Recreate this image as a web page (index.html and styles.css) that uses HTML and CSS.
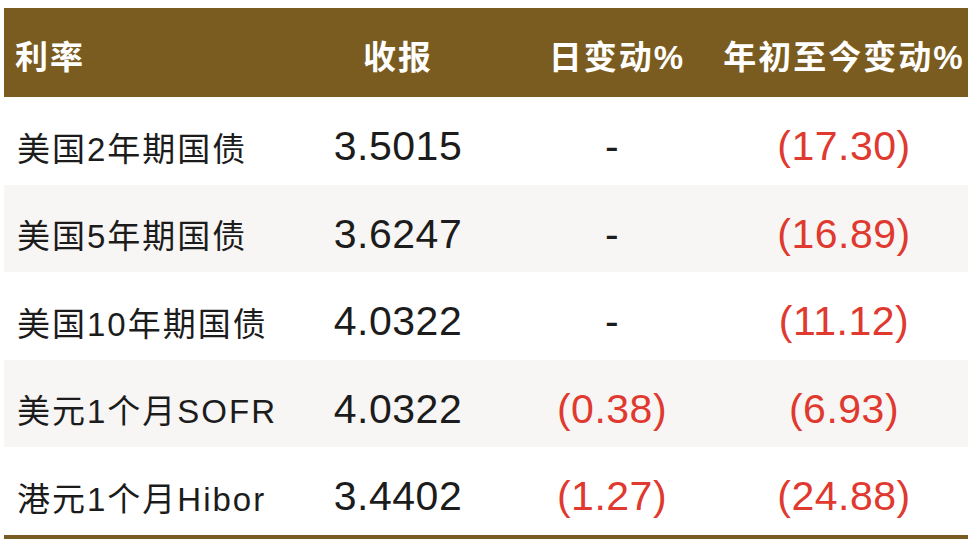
FILE: index.html
```html
<!DOCTYPE html>
<html lang="zh">
<head>
<meta charset="utf-8">
<link rel="stylesheet" href="styles.css">
</head>
<body>
<div class="rates">
  <div class="row head">
    <div class="cell name">利率</div>
    <div class="cell">收报</div>
    <div class="cell day-h">日变动%</div>
    <div class="cell">年初至今变动%</div>
  </div>
  <div class="row">
    <div class="cell name">美国2年期国债</div>
    <div class="cell num">3.5015</div>
    <div class="cell num">-</div>
    <div class="cell num neg">(17.30)</div>
  </div>
  <div class="row alt">
    <div class="cell name">美国5年期国债</div>
    <div class="cell num">3.6247</div>
    <div class="cell num">-</div>
    <div class="cell num neg">(16.89)</div>
  </div>
  <div class="row">
    <div class="cell name">美国10年期国债</div>
    <div class="cell num">4.0322</div>
    <div class="cell num">-</div>
    <div class="cell num neg">(11.12)</div>
  </div>
  <div class="row alt">
    <div class="cell name">美元1个月SOFR</div>
    <div class="cell num">4.0322</div>
    <div class="cell num neg">(0.38)</div>
    <div class="cell num neg">(6.93)</div>
  </div>
  <div class="row last">
    <div class="cell name">港元1个月Hibor</div>
    <div class="cell num">3.4402</div>
    <div class="cell num neg">(1.27)</div>
    <div class="cell num neg">(24.88)</div>
  </div>
</div>
</body>
</html>
```

FILE: styles.css
```css
html, body {
  margin: 0;
  padding: 0;
  background: #ffffff;
}

body {
  font-family: "Liberation Sans", "Noto Sans CJK SC", sans-serif;
  color: #1c1c1c;
}

.rates {
  margin: 8px 0 0 4px;
  width: 964px;
}

.row {
  display: grid;
  grid-template-columns: 288px 212px 216px 248px;
  height: 87.5px;
  box-sizing: border-box;
  padding-top: 12px;
}

.row.alt {
  background: #f7f6f4;
}

.row.last {
  border-bottom: 4px solid #7a5c22;
  height: 91.5px;
}

.row.head {
  height: 89px;
  padding-top: 5px;
  background: #7a5c20;
  color: #ffffff;
  font-weight: 700;
  font-size: 33px;
  letter-spacing: 2px;
}

.cell {
  display: flex;
  align-items: center;
  justify-content: center;
  white-space: nowrap;
}

.cell.name {
  justify-content: flex-start;
  padding-left: 13px;
  font-size: 33px;
  letter-spacing: 2px;
}

.row.head .cell.name {
  padding-left: 11px;
}

.cell.day-h {
  padding-left: 10px;
}

.cell.num {
  font-size: 41px;
  letter-spacing: 0.5px;
}

.cell.neg {
  color: #e0392f;
}
```
